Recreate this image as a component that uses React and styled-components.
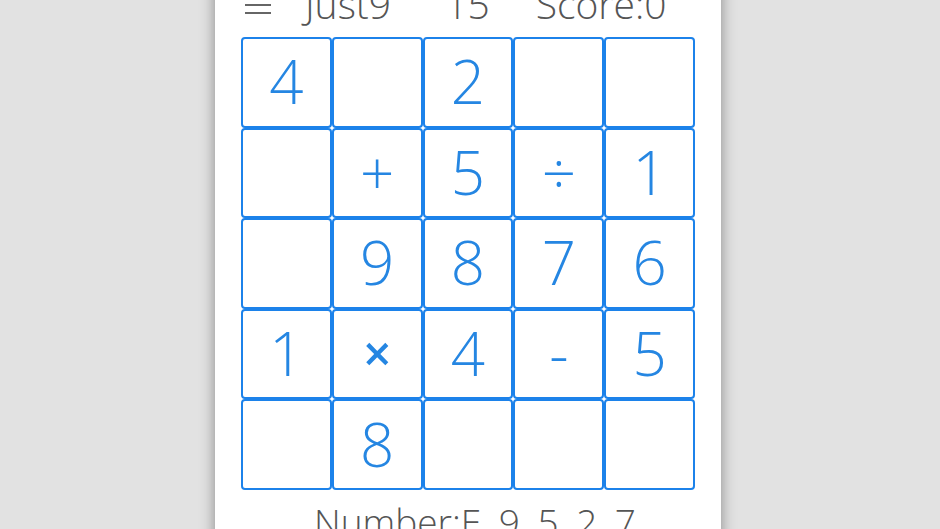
import React from 'react';
import styled, { createGlobalStyle } from 'styled-components';

const GlobalStyle = createGlobalStyle`
  html, body {
    margin: 0;
    padding: 0;
    height: 100%;
    overflow: hidden;
    background: #e2e2e2;
  }
  #root {
    height: 100%;
  }
`;

const board = [
  ['4', '', '2', '', ''],
  ['', '+', '5', '÷', '1'],
  ['', '9', '8', '7', '6'],
  ['1', '×', '4', '-', '5'],
  ['', '8', '', '', ''],
];

const Page = styled.div`
  display: flex;
  justify-content: center;
  height: 100%;
  padding-right: 4px;
`;

const Phone = styled.div`
  width: 506px;
  margin-top: -24px;
  height: 600px;
  background: #ffffff;
  box-shadow: 0 0 14px rgba(0, 0, 0, 0.4);
  display: flex;
  flex-direction: column;
  align-items: center;
  font-family: 'Open Sans', 'Liberation Sans', sans-serif;
  font-weight: 300;
`;

const Header = styled.div`
  align-self: stretch;
  height: 61px;
  box-sizing: border-box;
  padding: 8px 0 0 30px;
  display: flex;
  align-items: flex-start;
  color: #555555;
  font-size: 39px;
  line-height: 1;
`;

const Burger = styled.div`
  width: 26px;
  margin-top: 12px;
  display: flex;
  flex-direction: column;
  gap: 6.5px;

  span {
    display: block;
    height: 1.5px;
    background: #666666;
  }
`;

const HeadText = styled.span`
  margin-left: ${(p) => p.$gap}px;
  white-space: nowrap;
`;

const Grid = styled.div`
  width: 454px;
  display: grid;
  grid-template-columns: repeat(5, 1fr);
  grid-auto-rows: 90.6px;
`;

const Cell = styled.div`
  border: 2.5px solid #1c82ea;
  border-radius: 4px;
  display: flex;
  align-items: center;
  justify-content: center;
  color: #2586e2;
  font-size: ${(p) => (p.$bold ? 50 : 60)}px;
  font-weight: ${(p) => (p.$bold ? 600 : 300)};
  line-height: 1;
  padding-bottom: 2px;
`;

const Footer = styled.div`
  margin-top: 13px;
  color: #555555;
  font-size: 37px;
  line-height: 1;
  white-space: nowrap;
  padding-left: 14px;
`;

export default function App() {
  return (
    <>
      <GlobalStyle />
      <Page>
        <Phone>
          <Header>
            <Burger>
              <span />
              <span />
              <span />
            </Burger>
            <HeadText $gap={34}>Just9</HeadText>
            <HeadText $gap={54}>15</HeadText>
            <HeadText $gap={46}>Score:0</HeadText>
          </Header>
          <Grid>
            {board.flat().map((v, i) => (
              <Cell key={i} $bold={v === '×'}>
                {v}
              </Cell>
            ))}
          </Grid>
          <Footer>Number:E, 9, 5, 2, 7</Footer>
        </Phone>
      </Page>
    </>
  );
}
